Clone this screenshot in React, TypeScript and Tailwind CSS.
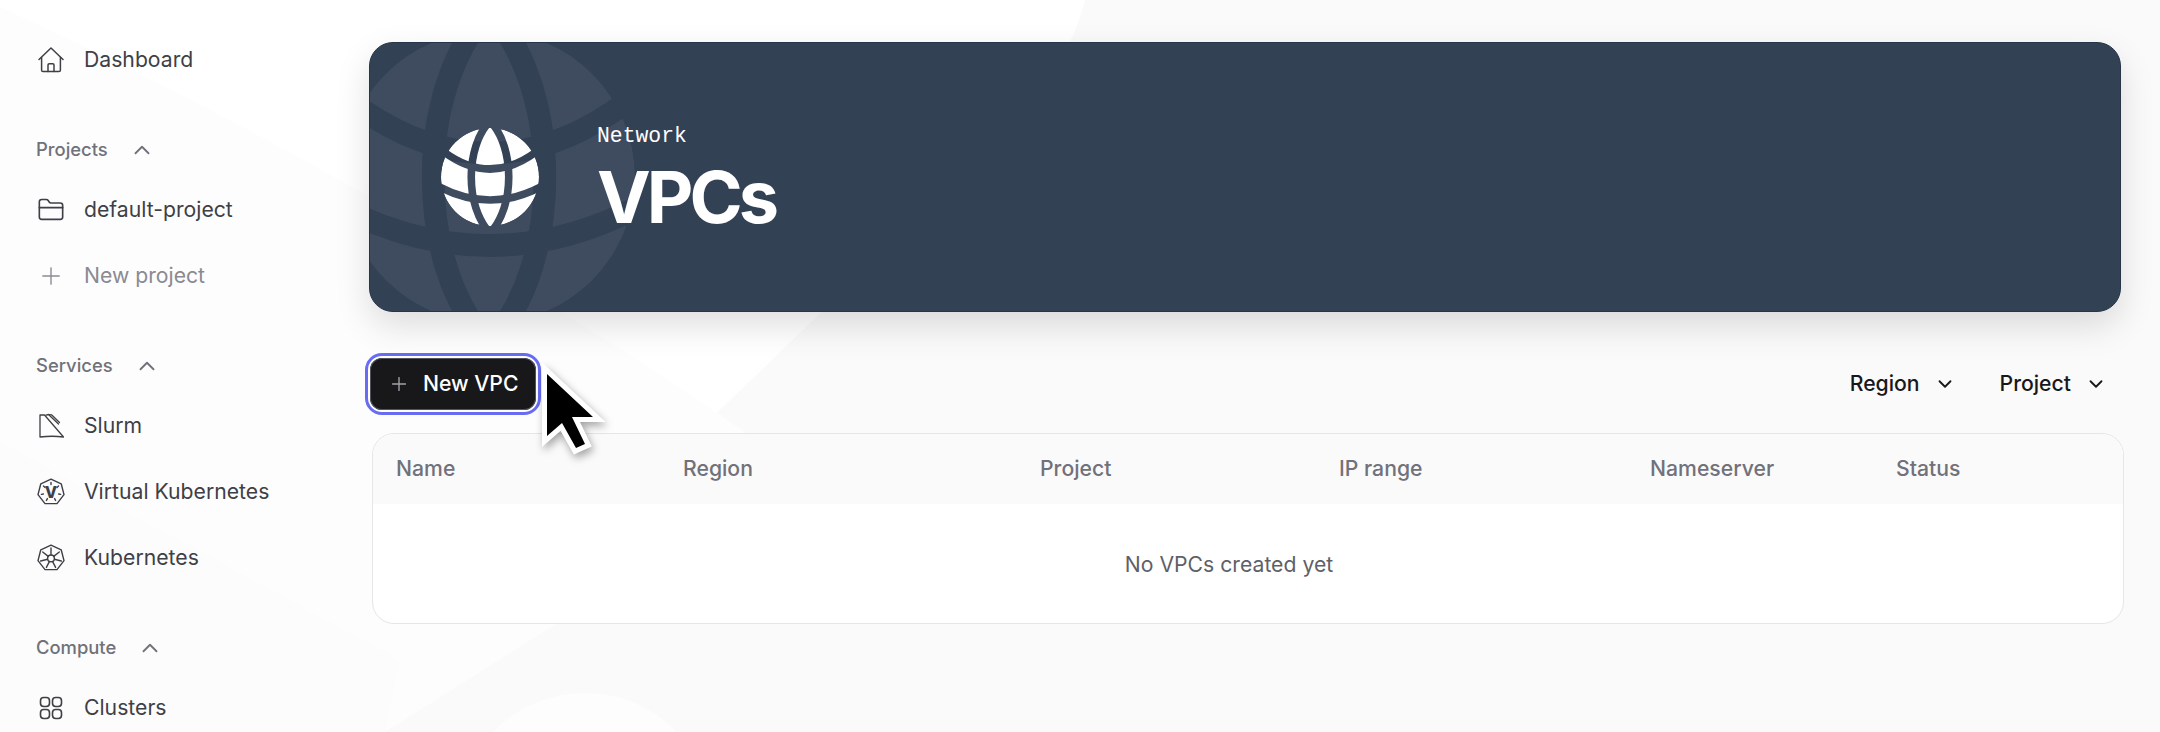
import { ChevronDown, ChevronUp, FolderClosed, Plus } from "lucide-react";
import { FC, ReactNode, useId } from "react";

const inter = "font-['Inter',sans-serif]";

const GlobeIcon: FC<{ className?: string }> = ({ className }) => {
  const maskId = useId();
  return (
    <svg viewBox="-49 -49 98 98" className={className} fill="currentColor">
      <mask id={maskId}>
        <circle cx={0} cy={0} r={49} fill="white" />
        <g fill="none" stroke="black" strokeWidth={7.6}>
          <path d="M0 -56C25 -30 25 30 0 56C-25 30 -25 -30 0 -56Z" />
          <path d="M-46 -25Q0 9 46 -25" />
          <path d="M-54 8Q0 38 54 8" />
        </g>
      </mask>
      <circle cx={0} cy={0} r={49} mask={`url(#${maskId})`} />
    </svg>
  );
};

const HomeIcon = () => (
  <svg viewBox="0 0 26 26" className="h-[26px] w-[26px]" fill="none" stroke="currentColor" strokeWidth={1.5} strokeLinejoin="round" strokeLinecap="round">
    <path d="M1 12.5L13 1L25 12.5" />
    <path d="M3.6 10.5V23.2C3.6 24 4.2 24.6 5 24.6H21C21.8 24.6 22.4 24 22.4 23.2V10.5" />
    <path d="M10 24.6V18C10 17.3 10.5 16.8 11.2 16.8H14.8C15.5 16.8 16 17.3 16 18V24.6" />
  </svg>
);

const SlurmIcon = () => (
  <svg viewBox="0 0 26 26" className="h-[26px] w-[26px]" fill="none" stroke="currentColor" strokeWidth={1.3} strokeLinejoin="round" strokeLinecap="round">
    <path d="M2 2H6.5L25.5 24C18 23 10 23 2 24Z" />
    <path d="M8 2.2L10.5 1.5L20.5 11" />
    <path d="M11.5 1.6L13.5 1.8L21.5 9.5" />
  </svg>
);

const heptagon = "M14 1.2L24.2 5.8L27 16.6L20 25.6H8L1 16.6L3.8 5.8Z";

const VirtualKubernetesIcon = () => (
  <svg viewBox="0 0 28 28" className="h-[28px] w-[28px]" fill="none" stroke="currentColor" strokeWidth={1.4} strokeLinejoin="round" strokeLinecap="round">
    <path d={heptagon} />
    <path d="M14 4.5V6.5M21.5 8L20 9.4M23.6 16.4L21.6 16M18.6 22.5L17.6 20.6M9.4 22.5L10.4 20.6M4.4 16.4L6.4 16M6.5 8L8 9.4" />
    <text x={14} y={20} textAnchor="middle" fontSize={16} fontWeight={800} fill="currentColor" stroke="none" fontFamily="Inter, sans-serif">V</text>
  </svg>
);

const KubernetesIcon = () => (
  <svg viewBox="0 0 28 28" className="h-[28px] w-[28px]" fill="none" stroke="currentColor" strokeWidth={1.4} strokeLinejoin="round" strokeLinecap="round">
    <path d={heptagon} />
    <circle cx={14} cy={14.4} r={3.4} />
    <path d="M14 4V11M22.3 8L16.7 12.4M24.3 17L17.4 15.2M18.6 23.4L15.5 17.4M9.4 23.4L12.5 17.4M3.7 17L10.6 15.2M5.7 8L11.3 12.4" />
  </svg>
);

const ClustersIcon = () => (
  <svg viewBox="0 0 24 24" className="h-[24px] w-[24px]" fill="none" stroke="currentColor" strokeWidth={1.6}>
    <rect x={1.5} y={1.5} width={9} height={9} rx={3.2} />
    <rect x={13.5} y={1.5} width={9} height={9} rx={3.2} />
    <rect x={1.5} y={13.5} width={9} height={9} rx={3.2} />
    <rect x={13.5} y={13.5} width={9} height={9} rx={3.2} />
  </svg>
);

const NavItem: FC<{ icon: ReactNode; label: string; muted?: boolean }> = ({ icon, label, muted }) => (
  <div className={`flex h-[66px] shrink-0 items-center text-[21.2px] ${muted ? "text-[#8a8a93]" : "text-[#3f3f46]"}`}>
    <div className="ml-[37px] mr-[19px] flex w-[28px] shrink-0 items-center justify-center">{icon}</div>
    <span>{label}</span>
  </div>
);

const SectionLabel: FC<{ label: string }> = ({ label }) => (
  <div className="mb-[15px] mt-[45px] flex h-[24px] shrink-0 items-center pl-[36px] text-[18.4px] font-medium text-[#71717a]">
    <span>{label}</span>
    <ChevronUp className="ml-[21px] h-[26px] w-[26px]" strokeWidth={1.7} />
  </div>
);

const Sidebar = () => (
  <aside className="flex w-[369px] shrink-0 flex-col pt-[27px]">
    <NavItem icon={<HomeIcon />} label="Dashboard" />
    <SectionLabel label="Projects" />
    <NavItem icon={<FolderClosed className="h-[28px] w-[28px]" strokeWidth={1.4} />} label="default-project" />
    <NavItem icon={<Plus className="h-[28px] w-[28px]" strokeWidth={1.2} />} label="New project" muted />
    <SectionLabel label="Services" />
    <NavItem icon={<SlurmIcon />} label="Slurm" />
    <NavItem icon={<VirtualKubernetesIcon />} label="Virtual Kubernetes" />
    <NavItem icon={<KubernetesIcon />} label="Kubernetes" />
    <SectionLabel label="Compute" />
    <NavItem icon={<ClustersIcon />} label="Clusters" />
  </aside>
);

const Banner = () => (
  <section className="relative flex h-[270px] items-center overflow-hidden rounded-[24px] border border-[#263548] bg-[#334155] pl-[71px] shadow-[0_14px_34px_rgba(0,0,0,0.13)]">
    <GlobeIcon className="absolute left-[-27px] top-[-12px] h-[292px] w-[292px] text-white opacity-[0.06]" />
    <GlobeIcon className="relative h-[98px] w-[98px] shrink-0 text-white" />
    <div className="relative ml-[58px] flex flex-col pt-[2px]">
      <span className="font-['Liberation_Mono',monospace] text-[21.4px] leading-[28px] text-white">Network</span>
      <span className="mt-[9px] text-[72px] font-bold leading-[76px] tracking-[-0.055em] text-white">VPCs</span>
    </div>
  </section>
);

const FilterButton: FC<{ label: string }> = ({ label }) => (
  <button className="flex items-center text-[21.2px] font-medium text-[#18181b]">
    <span>{label}</span>
    <ChevronDown className="ml-[14px] h-[22px] w-[22px]" strokeWidth={2} />
  </button>
);

const Toolbar = () => (
  <div className="mt-[45px] flex h-[54px] items-center justify-between">
    <button className="ml-[1px] flex h-[52px] w-[166px] items-center rounded-[12px] bg-[#18181b] pl-[18px] text-[21.2px] font-medium text-white outline-[3px] outline-offset-[2px] outline-[#686cf3] shadow-[inset_0_0_0_1px_#52525b]">
      <Plus className="h-[22px] w-[22px] text-[#a1a1aa]" strokeWidth={1.5} />
      <span className="ml-[13px]">New VPC</span>
    </button>
    <div className="flex items-center gap-[44px] pr-[14px]">
      <FilterButton label="Region" />
      <FilterButton label="Project" />
    </div>
  </div>
);

const columns = [
  { label: "Name", width: "w-[287px]" },
  { label: "Region", width: "w-[357px]" },
  { label: "Project", width: "w-[299px]" },
  { label: "IP range", width: "w-[311px]" },
  { label: "Nameserver", width: "w-[246px]" },
  { label: "Status", width: "" },
];

const VpcTable = () => (
  <div className="ml-[3px] mr-[-3px] mt-[22px] overflow-hidden rounded-[22px] border-[1.5px] border-[#e6e6e6] bg-white">
    <div className="flex h-[70px] items-center bg-[#fafafa] pl-[23px] text-[21.2px] font-medium text-[#71717a]">
      {columns.map(column => (
        <div key={column.label} className={column.width}>
          {column.label}
        </div>
      ))}
    </div>
    <div className="flex h-[119px] items-center justify-center pr-[38px] pt-[2px] text-[21.2px] text-[#5f5f68]">
      No VPCs created yet
    </div>
  </div>
);

// the faint shapes behind the page
const Backdrop = () => (
  <svg viewBox="0 0 2160 732" className="absolute inset-0 h-full w-full" fill="none">
    <path d="M0 0H1085C1070 60 1030 110 990 150L385 732H0Z" fill="#ffffff" />
    <path d="M0 7Q400 190 800 470L385 732H0Z" fill="#fdfdfd" />
    <path d="M0 442L400 660L385 732H0Z" fill="#fcfcfc" />
    <circle cx={585} cy={821} r={128} fill="#fdfdfd" />
  </svg>
);

const App = () => (
  <div className={`relative flex h-[732px] w-[2160px] overflow-hidden bg-[#fafafa] ${inter}`}>
    <Backdrop />
    <div className="relative flex w-full">
      <Sidebar />
      <main className="min-w-0 flex-1 pr-[39px] pt-[42px]">
        <Banner />
        <Toolbar />
        <VpcTable />
      </main>
    </div>
    {/* mouse pointer lying over the button */}
    <svg className="absolute left-[530px] top-[350px] h-[120px] w-[90px] drop-shadow-[2px_4px_4px_rgba(0,0,0,0.35)]" viewBox="530 350 90 120">
      <path d="M547 374L593 417H572L585 444L576 448L562 423L547 436Z" fill="#000" stroke="#fff" strokeWidth={10} strokeLinejoin="miter" strokeMiterlimit={3} paintOrder="stroke" />
    </svg>
  </div>
);

export default App;
